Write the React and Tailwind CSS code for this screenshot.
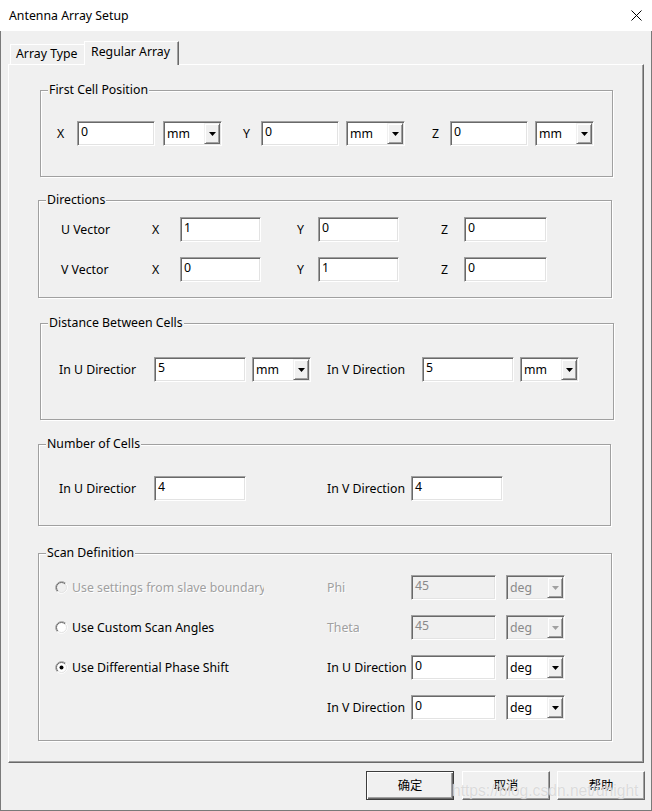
import React from "react";

function Edit({ w, value, disabled }) {
  return (
    <div
      className={`${w} h-[25px] shrink-0 border border-t-[#a0a0a0] border-l-[#a0a0a0] border-r-white border-b-white shadow-[inset_1px_1px_0_#696969,inset_-1px_-1px_0_#e3e3e3] pl-[3px] pt-[2px] leading-[16px] ${
        disabled ? "bg-[#f0f0f0] text-[#8a8a8a]" : "bg-white text-black"
      }`}
    >
      {value}
    </div>
  );
}

function Combo({ w, value, disabled }) {
  return (
    <div
      className={`${w} h-[25px] shrink-0 flex border border-t-[#a0a0a0] border-l-[#a0a0a0] border-r-white border-b-white shadow-[inset_1px_1px_0_#696969,inset_-1px_-1px_0_#e3e3e3] p-[1px] ${
        disabled ? "bg-[#f0f0f0] text-[#8a8a8a]" : "bg-white text-black"
      }`}
    >
      <div className="flex-1 flex items-center pl-[2px] leading-[16px]">{value}</div>
      <div className="w-[16px] h-full bg-[#f0f0f0] border border-t-[#f0f0f0] border-l-[#f0f0f0] border-r-[#696969] border-b-[#696969] shadow-[inset_1px_1px_0_#fff,inset_-1px_-1px_0_#a0a0a0] flex items-center justify-center">
        <svg width="7" height="4" viewBox="0 0 7 4">
          <path d="M0 0H7L3.5 4Z" fill={disabled ? "#a0a0a0" : "#000"} />
        </svg>
      </div>
    </div>
  );
}

function Radio({ checked, disabled }) {
  return (
    <svg width="13" height="13" viewBox="0 0 13 13" className="shrink-0">
      <circle cx="6.5" cy="6.5" r="5" fill={disabled ? "#f0f0f0" : "#fff"} />
      <path d="M2.26 10.74A6 6 0 0 1 10.74 2.26" stroke="#a0a0a0" fill="none" />
      <path d="M10.74 2.26A6 6 0 0 1 2.26 10.74" stroke="#fff" fill="none" />
      <path d="M2.96 10.04A5 5 0 0 1 10.04 2.96" stroke="#696969" fill="none" />
      <path d="M10.04 2.96A5 5 0 0 1 2.96 10.04" stroke="#e3e3e3" fill="none" />
      {checked && <circle cx="6.5" cy="6.5" r="2" fill="#000" />}
    </svg>
  );
}

function Group({ title, className, children }) {
  return (
    <div
      className={`relative shrink-0 border border-[#a0a0a0] shadow-[1px_1px_0_#fff,inset_1px_1px_0_#fff] ${className}`}
    >
      <span className="absolute left-[7px] top-[-9px] bg-[#f0f0f0] px-[1px] leading-[16px] whitespace-nowrap">
        {title}
      </span>
      {children}
    </div>
  );
}

function Label({ className, children, disabled }) {
  return (
    <span
      className={`shrink-0 whitespace-nowrap leading-[16px] ${className} ${
        disabled ? "text-[#a0a0a0] [text-shadow:1px_1px_0_#fff]" : ""
      }`}
    >
      {children}
    </span>
  );
}

export default function App() {
  return (
    <div className="w-[652px] h-[811px] flex flex-col bg-[#f0f0f0] text-[12.3px] text-black font-['Noto_Sans','Noto_Sans_CJK_SC',sans-serif] relative overflow-hidden">
      {/* Title bar */}
      <div className="h-[31px] shrink-0 bg-white flex items-center justify-between pl-[9px] pr-[10px]">
        <span className="text-[12.3px] leading-[18px]">Antenna Array Setup</span>
        <svg width="11" height="11" viewBox="0 0 11 11">
          <path d="M0.5 0.5L10.5 10.5M10.5 0.5L0.5 10.5" stroke="#000" strokeWidth="1" />
        </svg>
      </div>

      <div className="flex-1 flex flex-col border-l border-r border-b border-[#7a7a7a]">
        {/* Tabs */}
        <div className="h-[33px] shrink-0 flex items-end pl-[9px]">
          <div className="w-[74px] h-[20px] border-t border-l border-white bg-[#f0f0f0] pl-[5px] pt-[1px] leading-[16px] whitespace-nowrap">
            Array Type
          </div>
          <div className="relative z-10 -mb-[1px] w-[95px] h-[24px] border-t border-l border-white border-r border-r-[#696969] shadow-[inset_-1px_0_0_#a0a0a0] bg-[#f0f0f0] pl-[6px] pt-[2px] leading-[16px] whitespace-nowrap">
            Regular Array
          </div>
        </div>

        {/* Panel */}
        <div className="ml-[7px] w-[636px] h-[699px] shrink-0 flex flex-col border border-t-white border-l-white border-r-[#696969] border-b-[#696969] shadow-[inset_-1px_-1px_0_#a0a0a0]">
          {/* First Cell Position */}
          <Group title="First Cell Position" className="ml-[31px] mt-[25px] w-[573px] h-[87px]">
            <div className="flex items-center pt-[30px]">
              <Label className="ml-[16px] w-[20px]">X</Label>
              <Edit w="w-[78px]" value="0" />
              <Combo w="w-[59px] ml-[8px]" value="mm" />
              <Label className="ml-[21px] w-[18px]">Y</Label>
              <Edit w="w-[78px]" value="0" />
              <Combo w="w-[59px] ml-[7px]" value="mm" />
              <Label className="ml-[27px] w-[18px]">Z</Label>
              <Edit w="w-[78px]" value="0" />
              <Combo w="w-[59px] ml-[7px]" value="mm" />
            </div>
          </Group>

          {/* Directions */}
          <Group title="Directions" className="ml-[29px] mt-[23px] w-[574px] h-[98px]">
            <div className="flex flex-col gap-[15px] pt-[16px]">
              <div className="flex items-center">
                <Label className="ml-[22px] w-[91px]">U Vector</Label>
                <Label className="w-[28px]">X</Label>
                <Edit w="w-[81px]" value="1" />
                <Label className="ml-[36px] w-[21px]">Y</Label>
                <Edit w="w-[81px]" value="0" />
                <Label className="ml-[42px] w-[23px]">Z</Label>
                <Edit w="w-[83px]" value="0" />
              </div>
              <div className="flex items-center">
                <Label className="ml-[22px] w-[91px]">V Vector</Label>
                <Label className="w-[28px]">X</Label>
                <Edit w="w-[81px]" value="0" />
                <Label className="ml-[36px] w-[21px]">Y</Label>
                <Edit w="w-[81px]" value="1" />
                <Label className="ml-[42px] w-[23px]">Z</Label>
                <Edit w="w-[83px]" value="0" />
              </div>
            </div>
          </Group>

          {/* Distance Between Cells */}
          <Group title="Distance Between Cells" className="ml-[31px] mt-[25px] w-[574px] h-[97px]">
            <div className="flex items-center pt-[33px]">
              <Label className="ml-[18px] w-[95px]">In U Directior</Label>
              <Edit w="w-[92px]" value="5" />
              <Combo w="w-[59px] ml-[6px]" value="mm" />
              <Label className="ml-[16px] w-[95px]">In V Direction</Label>
              <Edit w="w-[92px]" value="5" />
              <Combo w="w-[59px] ml-[6px]" value="mm" />
            </div>
          </Group>

          {/* Number of Cells */}
          <Group title="Number of Cells" className="ml-[29px] mt-[24px] w-[573px] h-[82px]">
            <div className="flex items-center pt-[31px]">
              <Label className="ml-[20px] w-[95px]">In U Directior</Label>
              <Edit w="w-[92px]" value="4" />
              <Label className="ml-[81px] w-[84px]">In V Direction</Label>
              <Edit w="w-[92px]" value="4" />
            </div>
          </Group>

          {/* Scan Definition */}
          <Group title="Scan Definition" className="ml-[29px] mt-[27px] w-[574px] h-[188px]">
            <div className="flex flex-col gap-[15px] pt-[21px]">
              <div className="flex items-center h-[25px]">
                <div className="w-[288px] shrink-0 pl-[16px] flex items-center">
                  <Radio disabled />
                  <span className="ml-[4px] w-[192px] overflow-hidden whitespace-nowrap leading-[16px] text-[#a0a0a0] [text-shadow:1px_1px_0_#fff]">
                    Use settings from slave boundary
                  </span>
                </div>
                <Label className="w-[84px]" disabled>Phi</Label>
                <Edit w="w-[85px]" value="45" disabled />
                <Combo w="w-[59px] ml-[10px]" value="deg" disabled />
              </div>
              <div className="flex items-center h-[25px]">
                <div className="w-[288px] shrink-0 pl-[16px] flex items-center">
                  <Radio />
                  <span className="ml-[4px] whitespace-nowrap leading-[16px]">Use Custom Scan Angles</span>
                </div>
                <Label className="w-[84px]" disabled>Theta</Label>
                <Edit w="w-[85px]" value="45" disabled />
                <Combo w="w-[59px] ml-[10px]" value="deg" disabled />
              </div>
              <div className="flex items-center h-[25px]">
                <div className="w-[288px] shrink-0 pl-[16px] flex items-center">
                  <Radio checked />
                  <span className="ml-[4px] whitespace-nowrap leading-[16px]">Use Differential Phase Shift</span>
                </div>
                <Label className="w-[84px]">In U Direction</Label>
                <Edit w="w-[85px]" value="0" />
                <Combo w="w-[59px] ml-[10px]" value="deg" />
              </div>
              <div className="flex items-center h-[25px]">
                <div className="w-[288px] shrink-0" />
                <Label className="w-[84px]">In V Direction</Label>
                <Edit w="w-[85px]" value="0" />
                <Combo w="w-[59px] ml-[10px]" value="deg" />
              </div>
            </div>
          </Group>
        </div>

        {/* Buttons */}
        <div className="mt-[8px] h-[29px] shrink-0 flex justify-end pr-[6px]">
          <button className="w-[88px] h-[29px] mr-[8px] bg-[#f0f0f0] border border-[#3c3c3c] shadow-[inset_1px_1px_0_#fff,inset_-1px_-1px_0_#696969,inset_-2px_-2px_0_#a0a0a0] text-[12.3px] leading-[16px]">
            确定
          </button>
          <button className="w-[88px] h-[29px] mr-[7px] bg-[#f0f0f0] border border-t-white border-l-white border-r-[#696969] border-b-[#696969] shadow-[inset_-1px_-1px_0_#a0a0a0] text-[12.3px] leading-[16px]">
            取消
          </button>
          <button className="w-[88px] h-[29px] bg-[#f0f0f0] border border-t-white border-l-white border-r-[#696969] border-b-[#696969] shadow-[inset_-1px_-1px_0_#a0a0a0] text-[12.3px] leading-[16px]">
            帮助
          </button>
        </div>
      </div>

      {/* Watermark */}
      <span className="absolute left-[452px] top-[780px] text-[15.6px] leading-[22px] font-['Liberation_Sans',sans-serif] text-[#c4c4c4]/60 [text-shadow:0_0_1px_#fff] whitespace-nowrap pointer-events-none">
        https://blog.csdn.net/uhight
      </span>
    </div>
  );
}
